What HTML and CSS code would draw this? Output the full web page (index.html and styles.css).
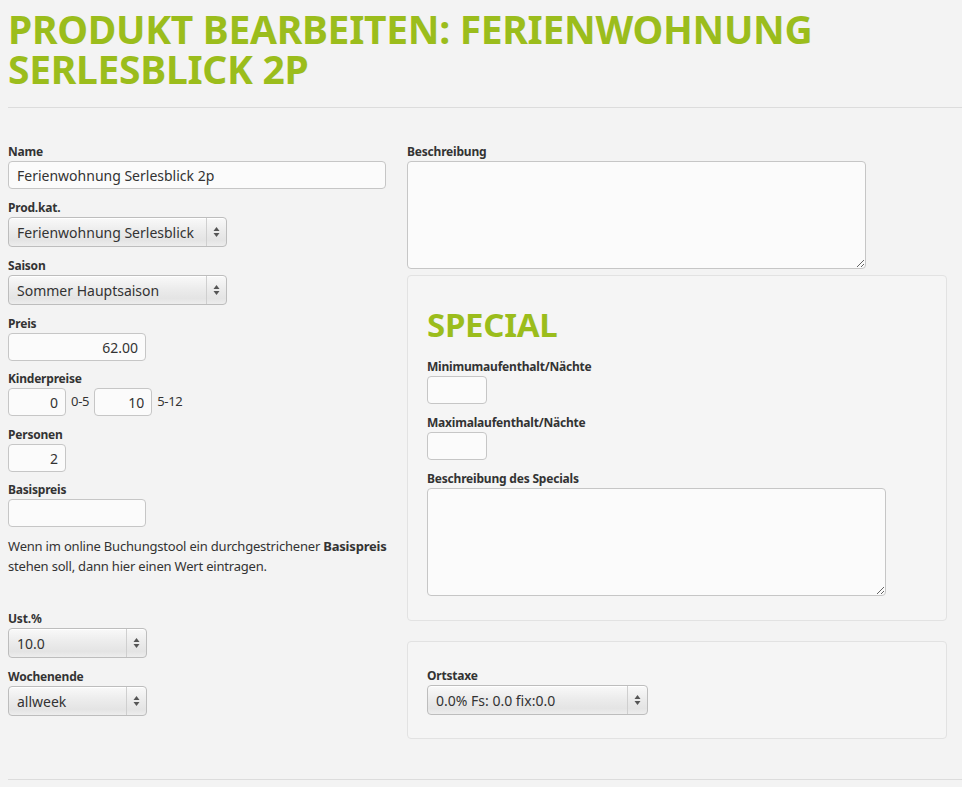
FILE: index.html
```html
<!DOCTYPE html>
<html lang="de">
<head>
<meta charset="utf-8">
<title>Produkt bearbeiten</title>
<link rel="stylesheet" href="styles.css">
</head>
<body>
<div class="page">
  <h1 class="title">PRODUKT BEARBEITEN: FERIENWOHNUNG SERLESBLICK 2P</h1>
  <hr class="rule">
  <form class="grid">
    <div class="col-left">
      <div class="group">
        <label class="lbl">Name</label>
        <input class="field w-full" type="text" value="Ferienwohnung Serlesblick 2p">
      </div>
      <div class="group">
        <label class="lbl">Prod.kat.</label>
        <span class="select w-218">
          <select><option>Ferienwohnung Serlesblick</option></select>
          <span class="arrows"><svg width="7" height="12" viewBox="0 0 7 12"><path d="M3.5 1 L6.5 5 L0.5 5 Z M3.5 11 L6.5 7 L0.5 7 Z" fill="#555"/></svg></span>
        </span>
      </div>
      <div class="group">
        <label class="lbl">Saison</label>
        <span class="select w-218">
          <select><option>Sommer Hauptsaison</option></select>
          <span class="arrows"><svg width="7" height="12" viewBox="0 0 7 12"><path d="M3.5 1 L6.5 5 L0.5 5 Z M3.5 11 L6.5 7 L0.5 7 Z" fill="#555"/></svg></span>
        </span>
      </div>
      <div class="group tight">
        <label class="lbl">Preis</label>
        <input class="field num w-138" type="text" value="62.00">
      </div>
      <div class="group">
        <label class="lbl">Kinderpreise</label>
        <div class="inline-row">
          <input class="field num w-58" type="text" value="0">
          <span class="unit">0-5</span>
          <input class="field num w-58" type="text" value="10">
          <span class="unit">5-12</span>
        </div>
      </div>
      <div class="group tight">
        <label class="lbl">Personen</label>
        <input class="field num w-58" type="text" value="2">
      </div>
      <div class="group help-group">
        <label class="lbl">Basispreis</label>
        <input class="field w-138" type="text" value="">
        <p class="help">Wenn im online Buchungstool ein durchgestrichener <strong>Basispreis</strong> stehen soll, dann hier einen Wert eintragen.</p>
      </div>
      <div class="group">
        <label class="lbl">Ust.%</label>
        <span class="select w-139">
          <select><option>10.0</option></select>
          <span class="arrows"><svg width="7" height="12" viewBox="0 0 7 12"><path d="M3.5 1 L6.5 5 L0.5 5 Z M3.5 11 L6.5 7 L0.5 7 Z" fill="#555"/></svg></span>
        </span>
      </div>
      <div class="group">
        <label class="lbl">Wochenende</label>
        <span class="select w-139">
          <select><option>allweek</option></select>
          <span class="arrows"><svg width="7" height="12" viewBox="0 0 7 12"><path d="M3.5 1 L6.5 5 L0.5 5 Z M3.5 11 L6.5 7 L0.5 7 Z" fill="#555"/></svg></span>
        </span>
      </div>
    </div>
    <div class="col-right">
      <div class="group">
        <label class="lbl">Beschreibung</label>
        <textarea class="field area"></textarea>
      </div>
      <div class="well special">
        <h2 class="subtitle">SPECIAL</h2>
        <div class="group">
          <label class="lbl">Minimumaufenthalt/Nächte</label>
          <input class="field w-60" type="text" value="">
        </div>
        <div class="group">
          <label class="lbl">Maximalaufenthalt/Nächte</label>
          <input class="field w-60" type="text" value="">
        </div>
        <div class="group last">
          <label class="lbl">Beschreibung des Specials</label>
          <textarea class="field area"></textarea>
        </div>
      </div>
      <div class="well tax">
        <div class="group last">
          <label class="lbl">Ortstaxe</label>
          <span class="select w-221">
            <select><option>0.0% Fs: 0.0 fix:0.0</option></select>
            <span class="arrows"><svg width="7" height="12" viewBox="0 0 7 12"><path d="M3.5 1 L6.5 5 L0.5 5 Z M3.5 11 L6.5 7 L0.5 7 Z" fill="#555"/></svg></span>
          </span>
        </div>
      </div>
    </div>
  </form>
  <hr class="rule bottom">
</div>
</body>
</html>
```

FILE: styles.css
```css
html, body {
  margin: 0;
  padding: 0;
  background: #f3f3f3;
}

body {
  font-family: "Noto Sans", "Open Sans", sans-serif;
  color: #333;
  font-size: 13px;
}

.page {
  padding: 9px 0 0 8px;
}

.title {
  margin: 0;
  font-size: 39px;
  line-height: 40px;
  font-weight: 700;
  color: #9bbd1c;
  letter-spacing: -0.3px;
}

.rule {
  border: 0;
  border-top: 1px solid #dcdcdc;
  margin: 18px 0 0 0;
  height: 0;
}

.rule.bottom {
  margin-top: 40px;
}

.grid {
  display: grid;
  grid-template-columns: 378px 540px;
  column-gap: 21px;
  padding-top: 35px;
  align-items: start;
}

.group {
  margin-bottom: 10px;
}

.group.tight {
  margin-bottom: 9px;
}

.group.last {
  margin-bottom: 0;
}

.lbl {
  display: block;
  font-size: 12px;
  line-height: 17px;
  font-weight: 700;
  color: #333;
  margin-bottom: 1px;
  letter-spacing: -0.2px;
}

.field {
  box-sizing: border-box;
  height: 28px;
  border: 1px solid #c6c6c6;
  border-radius: 4px;
  background: #fbfbfb;
  font-family: inherit;
  font-size: 14px;
  color: #333;
  padding: 0 8px;
  margin: 0;
  display: block;
}

.field.num {
  text-align: right;
  padding-right: 7px;
}

.w-full { width: 378px; }
.w-138 { width: 138px; }
.w-58 { width: 58px; }
.w-60 { width: 60px; }

.inline-row {
  display: flex;
  align-items: center;
  gap: 5px;
}

.unit {
  font-size: 13px;
  line-height: 20px;
  margin-top: -3px;
  letter-spacing: -0.3px;
}

.help {
  margin: 9px -12px 0 0;
  font-size: 13px;
  line-height: 20px;
  color: #333;
  letter-spacing: -0.2px;
}

.help strong {
  font-weight: 700;
}

.help-group {
  margin-bottom: 34px;
}

.select {
  position: relative;
  display: block;
  height: 30px;
}

.w-218 { width: 219px; }
.w-139 { width: 139px; }
.w-221 { width: 221px; }

.select select {
  -webkit-appearance: none;
  appearance: none;
  box-sizing: border-box;
  width: 100%;
  height: 30px;
  margin: 0;
  border: 1px solid #bdbdbd;
  border-radius: 4px;
  background: linear-gradient(to bottom, #f9f9f9 0%, #ececec 45%, #e4e4e4 80%, #ededed 100%);
  box-shadow: inset 0 1px 0 #fff;
  font-family: inherit;
  font-size: 14px;
  color: #333;
  padding: 0 24px 0 8px;
}

.select .arrows {
  position: absolute;
  top: 1px;
  right: 1px;
  bottom: 1px;
  width: 19px;
  border-left: 1px solid #cfcfcf;
  display: flex;
  align-items: center;
  justify-content: center;
  pointer-events: none;
}

.area {
  width: 459px;
  height: 108px;
  padding: 6px 8px;
  resize: both;
}

.well {
  box-sizing: border-box;
  background: #f5f5f5;
  border: 1px solid #e2e2e2;
  border-radius: 4px;
  padding: 19px 19px 24px 19px;
  width: 540px;
}

.special {
  margin-top: -4px;
}

.subtitle {
  margin: 12px 0 15px 0;
  font-size: 33px;
  line-height: 36px;
  font-weight: 700;
  color: #9bbd1c;
  letter-spacing: -0.3px;
}

.tax {
  margin-top: 20px;
  padding-top: 25px;
  padding-bottom: 23px;
}
```
